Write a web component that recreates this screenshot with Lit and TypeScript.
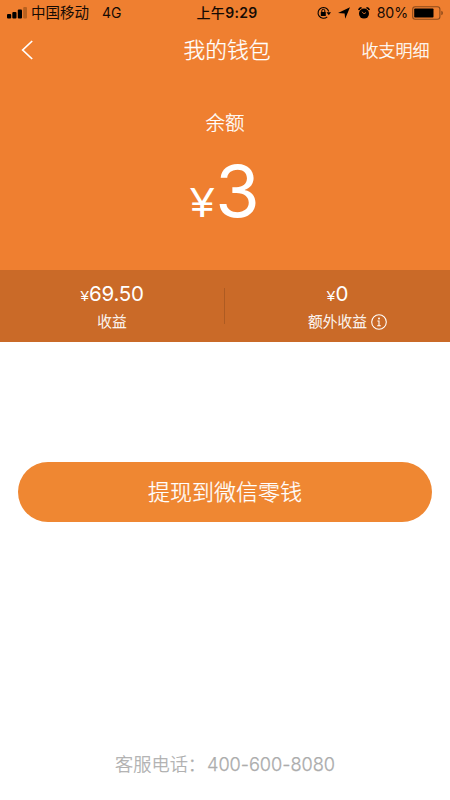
import { LitElement, html, css } from "lit";
import { customElement } from "lit/decorators.js";

@customElement("status-bar")
class StatusBar extends LitElement {
  static styles = css`
    :host { display: grid; grid-template-columns: 1fr auto 1fr; height: 25px; align-items: center; color: #160b04; font-size: 14.5px; line-height: 24px; white-space: nowrap; font-weight: 400; }
    .left, .right { display: flex; align-items: center; }
    .left { padding-left: 7px; }
    .signal { margin-right: 4px; }
    .net { margin-left: 13px; font-size: 14px; }
    .time { font-weight: 600; font-size: 14px; line-height: 22px; letter-spacing: 0.3px; padding-left: 4px; }
    .half { font-weight: 500; }
    .right { justify-content: flex-end; padding-right: 6px; }
    .lock { margin-right: 7px; }
    .arrow { margin-right: 8px; }
    .alarm { margin-right: 7px; }
    .pct { font-size: 14.2px; margin-right: 4px; letter-spacing: -0.1px; }
    svg { display: block; flex: none; }
  `;
  render() {
    return html`
      <div class="left">
        <svg class="signal" width="20" height="12" viewBox="0 0 20 12">
          <g fill="#000"><rect x="0" y="7" width="4.2" height="4.5" rx="1"/><rect x="5.3" y="5" width="4.2" height="6.5" rx="1"/><rect x="10.8" y="2.5" width="4.2" height="9" rx="1"/></g>
          <rect x="16.2" y="0" width="3.8" height="11.5" rx="1" fill="#b8611f"/>
        </svg>
        <span>中国移动</span><span class="net">4G</span>
      </div>
      <div class="time"><span class="half">上午</span>9:29</div>
      <div class="right">
        <svg class="lock" width="14" height="14" viewBox="0 0 14 14">
          <path d="M10.2 10.8A5.4 5.4 0 1 1 11.7 5.5" fill="none" stroke="#000" stroke-width="1.1"/>
          <path d="M9.5 6.3h4.5l-2.2 3z"/>
          <rect x="3.8" y="6" width="5" height="3.9" rx=".5"/>
          <path d="M4.8 6V4.8a1.5 1.5 0 0 1 3 0V6" fill="none" stroke="#000" stroke-width="1"/>
        </svg>
        <svg class="arrow" width="12" height="12" viewBox="0 0 12 12"><path d="M12 .3 7.2 11.7 6.6 6.4 0 6z"/></svg>
        <svg class="alarm" width="12" height="12" viewBox="0 0 12 12">
          <circle cx="6" cy="6.6" r="5"/>
          <path d="M.8 3.2A3 3 0 0 1 3.6.8M11.2 3.2A3 3 0 0 0 8.4.8" fill="none" stroke="#000" stroke-width="1.5"/>
          <path d="M3.8 4.7 6 6.8 8 5.5" fill="none" stroke="#ef7f30" stroke-width=".8"/>
        </svg>
        <span class="pct">80%</span>
        <svg width="32" height="14" viewBox="0 0 32 14">
          <rect x=".7" y=".8" width="27.2" height="12.4" rx="2.5" fill="none" stroke="#8c4919" stroke-width="1.1"/>
          <rect x="2.2" y="2.4" width="19.3" height="9.2" rx=".8"/>
          <path d="M29.3 4.8a2.3 2.3 0 0 1 0 4.4z" fill="#8c4919"/>
        </svg>
      </div>`;
  }
}

@customElement("app-root")
class AppRoot extends LitElement {
  static styles = css`
    :host { display: flex; flex-direction: column; width: 450px; height: 800px; background: #fff; color: #fff; font-family: Inter, "Noto Sans CJK SC", sans-serif; font-weight: 400; overflow: hidden; }
    .title, .detail, .caption, .label, .action, .phone { font-weight: 300; -webkit-text-stroke: 0.25px currentColor; }
    .hero { background: #ef7f30; height: 270px; flex: none; }
    .nav { display: grid; grid-template-columns: 1fr auto 1fr; align-items: center; height: 50px; padding: 0 20.5px; }
    .title { font-size: 21.8px; line-height: 32px; padding: 0 0 0 4px; }
    .detail { font-size: 17px; line-height: 24px; padding-top: 1px; text-align: right; }
    .balance { display: flex; flex-direction: column; align-items: center; padding-top: 33px; }
    .caption { font-size: 19.5px; line-height: 30px; }
    .amount { display: flex; align-items: baseline; margin-top: 13px; line-height: 80px; }
    .yen { font-family: "Liberation Sans", sans-serif; font-size: 43px; margin-right: 1px; }
    .num { font-size: 72px; }
    .stats { display: grid; grid-template-columns: 224px 1px 225px; align-items: center; height: 72px; flex: none; background: #ca6a28; }
    .rule { height: 36px; background: #ae5b22; }
    .stat { display: flex; flex-direction: column; align-items: center; }
    .value { display: flex; align-items: baseline; line-height: 28px; margin-top: 1px; font-size: 20.5px; letter-spacing: -0.3px; }
    .small { font-family: "Liberation Sans", sans-serif; font-size: 15px; letter-spacing: 0.3px; }
    .label { display: flex; align-items: center; font-size: 14.7px; line-height: 22px; margin-top: 1px; }
    .extra { padding-left: 20px; }
    .info { margin-left: 4px; }
    .action { display: block; flex: none; margin: 120px 18px 0; height: 60px; border: 0; border-radius: 30px; background: #ef8732; color: #fff; font-family: inherit; font-size: 22px; line-height: 32px; padding: 0 0 1px; }
    .phone { display: flex; justify-content: center; margin-top: auto; height: 52px; color: #acacac; font-size: 18.2px; line-height: 32px; }
    .digits { letter-spacing: -0.05px; margin-left: 1px; }
    svg { display: block; }
  `;
  render() {
    return html`
      <div class="hero">
        <status-bar></status-bar>
        <div class="nav">
          <svg width="14" height="20" viewBox="0 0 14 20"><path d="M11.2 1 1.7 10l9.5 9" fill="none" stroke="#fff" stroke-width="1.7"/></svg>
          <div class="title">我的钱包</div>
          <div class="detail">收支明细</div>
        </div>
        <div class="balance">
          <div class="caption">余额</div>
          <div class="amount"><span class="yen">¥</span><span class="num">3</span></div>
        </div>
      </div>
      <div class="stats">
        <div class="stat">
          <div class="value"><span class="small">¥</span>69.50</div>
          <div class="label">收益</div>
        </div>
        <div class="rule"></div>
        <div class="stat">
          <div class="value"><span class="small">¥</span>0</div>
          <div class="label extra">额外收益
            <svg class="info" width="16" height="16" viewBox="0 0 16 16"><circle cx="8" cy="8" r="7.3" fill="none" stroke="#fff" stroke-width="1.1"/><circle cx="8" cy="4.4" r="1" fill="#fff"/><path d="M6.4 7H8v4.8M6.2 11.8h3.6" fill="none" stroke="#fff" stroke-width="1.1"/></svg>
          </div>
        </div>
      </div>
      <button class="action">提现到微信零钱</button>
      <div class="phone">客服电话：<span class="digits">400-600-8080</span></div>`;
  }
}
